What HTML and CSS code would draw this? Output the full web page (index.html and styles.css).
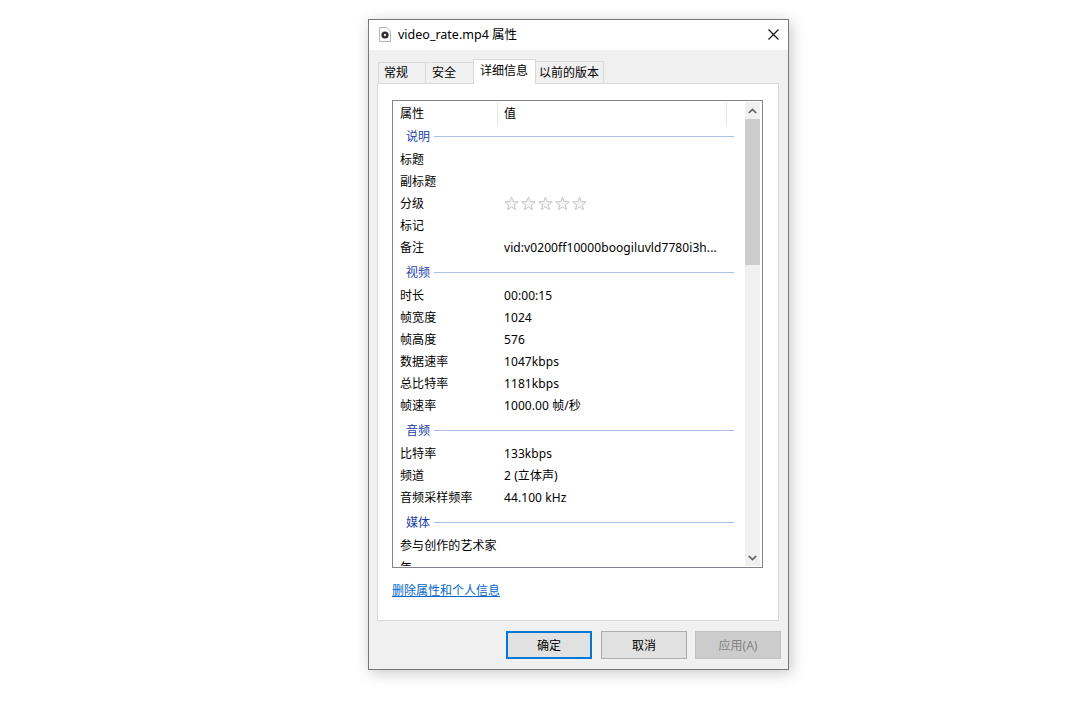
FILE: index.html
```html
<!DOCTYPE html>
<html lang="zh-CN">
<head>
  <meta charset="UTF-8" />
  <title>video_rate.mp4 属性</title>
  <link rel="stylesheet" href="styles.css">
</head>
<body>
  <svg class="defs" width="0" height="0">
    <symbol id="star" viewBox="0 0 15 15">
      <path d="M7.5 1 L9.2 5.6 L14.2 5.8 L10.3 8.9 L11.6 13.7 L7.5 11 L3.4 13.7 L4.7 8.9 L0.8 5.8 L5.8 5.6 Z" fill="#f4f4f4" stroke="#c6c6c6" stroke-width="1"/>
    </symbol>
  </svg>

  <div class="dialog">
    <div class="title-bar">
      <svg class="file-icon" width="12" height="15" viewBox="0 0 12 15">
        <path d="M0.5 0.5 H8 L11.5 4 V14.5 H0.5 Z" fill="#fafafa" stroke="#b5b5b5"/>
        <circle cx="6" cy="8" r="3.6" fill="#2b2b2b"/>
        <circle cx="6" cy="8" r="1.2" fill="#e8e8e8"/>
      </svg>
      <span class="title-text">video_rate.mp4 属性</span>
      <svg class="close-icon" width="11" height="11" viewBox="0 0 11 11">
        <path d="M0.5 0.5 L10.5 10.5 M10.5 0.5 L0.5 10.5" stroke="#111" stroke-width="1.1" fill="none"/>
      </svg>
    </div>

    <div class="dialog-body">
      <div class="tabs">
        <div class="tab">常规</div>
        <div class="tab second">安全</div>
        <div class="tab active">详细信息</div>
        <div class="tab last">以前的版本</div>
      </div>

      <div class="panel">
        <div class="list-box">
          <div class="list">
            <div class="list-header">
              <div class="col-name">属性</div>
              <div class="col-value">值</div>
            </div>

            <div class="group first"><span>说明</span><i></i></div>
            <div class="row"><div>标题</div></div>
            <div class="row"><div>副标题</div></div>
            <div class="row"><div>分级</div>
              <div class="stars">
                <svg><use href="#star"/></svg><svg><use href="#star"/></svg><svg><use href="#star"/></svg><svg><use href="#star"/></svg><svg><use href="#star"/></svg>
              </div>
            </div>
            <div class="row"><div>标记</div></div>
            <div class="row"><div>备注</div><div>vid:v0200ff10000boogiluvld7780i3h...</div></div>

            <div class="group"><span>视频</span><i></i></div>
            <div class="row"><div>时长</div><div>00:00:15</div></div>
            <div class="row"><div>帧宽度</div><div>1024</div></div>
            <div class="row"><div>帧高度</div><div>576</div></div>
            <div class="row"><div>数据速率</div><div>1047kbps</div></div>
            <div class="row"><div>总比特率</div><div>1181kbps</div></div>
            <div class="row"><div>帧速率</div><div>1000.00 帧/秒</div></div>

            <div class="group"><span>音频</span><i></i></div>
            <div class="row"><div>比特率</div><div>133kbps</div></div>
            <div class="row"><div>频道</div><div>2 (立体声)</div></div>
            <div class="row"><div>音频采样频率</div><div>44.100 kHz</div></div>

            <div class="group"><span>媒体</span><i></i></div>
            <div class="row"><div>参与创作的艺术家</div></div>
            <div class="row"><div>年</div></div>
          </div>

          <div class="scrollbar">
            <div class="scroll-btn">
              <svg width="9" height="6" viewBox="0 0 9 6"><path d="M0.8 5 L4.5 1.4 L8.2 5" fill="none" stroke="#606060" stroke-width="1.7"/></svg>
            </div>
            <div class="track"><div class="thumb"></div></div>
            <div class="scroll-btn">
              <svg width="9" height="6" viewBox="0 0 9 6"><path d="M0.8 1 L4.5 4.6 L8.2 1" fill="none" stroke="#606060" stroke-width="1.7"/></svg>
            </div>
          </div>
        </div>

        <a href="#" class="remove-link">删除属性和个人信息</a>
      </div>

      <div class="buttons">
        <button class="btn ok">确定</button>
        <button class="btn">取消</button>
        <button class="btn disabled">应用(A)</button>
      </div>
    </div>
  </div>
</body>
</html>
```

FILE: styles.css
```css
html, body {
  margin: 0;
  height: 100%;
  background: #fff;
  font-family: "Noto Sans", "Noto Sans CJK SC", sans-serif;
  font-size: 12px;
  color: #000;
  overflow: hidden;
}

.defs { display: block; height: 0; }

.dialog {
  width: 421px;
  height: 651px;
  margin: 19px 0 0 368px;
  box-sizing: border-box;
  border: 1px solid #777;
  background: #f0f0f0;
  box-shadow: 2px 3px 14px rgba(0,0,0,0.22);
  display: flex;
  flex-direction: column;
}

.title-bar { height: 30px; flex: none; box-sizing: border-box; background: #fff; display: flex; align-items: center; padding: 0 9px 2px 10px; }
.file-icon { margin-right: 7px; }
.title-text { flex: 1; font-size: 12.5px; margin-bottom: 2px; }

.dialog-body { flex: 1; display: flex; flex-direction: column; }

.tabs { display: flex; align-items: flex-end; height: 33px; padding-left: 9px; flex: none; }
.tab { width: 47px; height: 21px; box-sizing: border-box; border: 1px solid #d9d9d9; border-bottom: none; border-right: none; padding-left: 5px; line-height: 19px; background: #f0f0f0; }
.tab.second { width: 48px; padding-left: 6px; }
.tab.active { width: 63px; height: 25px; padding: 0 1px 0 0; text-align: center; line-height: 21px; background: #fff; border-right: 1px solid #d9d9d9; margin-bottom: -1px; position: relative; z-index: 1; }
.tab.last { width: 68px; height: 22px; padding-left: 3px; border-left: none; border-right: 1px solid #d9d9d9; line-height: 21px; }

.panel { height: 538px; margin: 0 9px 0 8px; box-sizing: border-box; background: #fff; border: 1px solid #d9d9d9; padding: 16px 15px 0 14px; }

.list-box { width: 371px; height: 468px; box-sizing: border-box; border: 1px solid #82828c; padding: 1px 2px 1px 0; display: flex; }
.list { flex: 1; overflow: hidden; min-width: 0; }

.list-header { display: flex; height: 24px; line-height: 24px; }
.col-name { width: 105px; box-sizing: border-box; padding-left: 7px; border-right: 1px solid #e5e5e5; }
.col-value { width: 229px; box-sizing: border-box; padding-left: 6px; border-right: 1px solid #e5e5e5; }

.group { display: flex; align-items: center; height: 26px; padding: 3px 11px 1px 13px; box-sizing: border-box; color: #1c3fa8; }
.group.first { height: 22px; padding-top: 0; padding-bottom: 2px; }
.group i { flex: 1; height: 1px; background: #acbde6; margin-left: 4px; }

.row { display: grid; grid-template-columns: 104px 1fr; height: 22px; line-height: 24px; padding-left: 7px; white-space: nowrap; letter-spacing: 0.08px; }

.stars { display: flex; align-items: center; padding-bottom: 1px; }
.stars svg { width: 15px; height: 15px; margin-right: 2px; }

.scrollbar { width: 15px; flex: none; display: flex; flex-direction: column; background: #f0f0f0; }
.scroll-btn { height: 17px; flex: none; display: flex; align-items: center; justify-content: center; }
.track { flex: 1; }
.thumb { height: 146px; background: #cdcdcd; }

.remove-link { display: inline-block; margin-top: 14px; line-height: 18px; color: #0066cc; text-decoration: underline; }

.buttons { display: flex; justify-content: flex-end; gap: 8px; padding: 10px 7px 0 0; }
.btn { width: 86px; height: 28px; box-sizing: border-box; padding: 0 0 1px; border: 1px solid #adadad; background: #e1e1e1; font: inherit; color: #000; }
.btn.ok { border: 2px solid #0078d7; margin-right: 1px; }
.btn.disabled { background: #cccccc; border-color: #bfbfbf; color: #838383; }
```
